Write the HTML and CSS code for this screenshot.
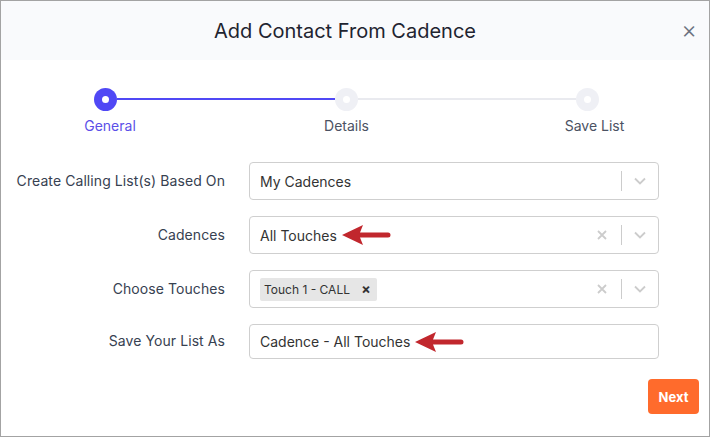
FILE: index.html
```html
<!DOCTYPE html>
<html lang="en">
<head>
    <meta charset="UTF-8">
    <title>Add Contact From Cadence</title>
    <link rel="stylesheet" href="styles.css">
</head>
<body>
    <div class="modal">
        <div class="modal-header">
            <h1>Add Contact From Cadence</h1>
            <span class="close">&times;</span>
        </div>

        <div class="stepper">
            <div class="step active first">
                <div class="dot"></div>
                <div class="step-label">General</div>
            </div>
            <div class="line active"></div>
            <div class="step">
                <div class="dot"></div>
                <div class="step-label">Details</div>
            </div>
            <div class="line"></div>
            <div class="step last">
                <div class="dot"></div>
                <div class="step-label">Save List</div>
            </div>
        </div>

        <div class="form">
            <label>Create Calling List(s) Based On</label>
            <div class="select">
                <span class="value">My Cadences</span>
                <span class="indicators">
                    <span class="sep"></span>
                    <svg class="chevron" width="12" height="8" viewBox="0 0 12 8"><path d="M1 1.5 L6 6.5 L11 1.5" fill="none" stroke="#cccccc" stroke-width="1.8"/></svg>
                </span>
            </div>

            <label>Cadences</label>
            <div class="select">
                <span class="value">All Touches
                    <svg class="arrow" width="50" height="20" viewBox="0 0 50 20"><path d="M0 10 L21 0 L18 7.5 L46 7.5 A2.5 2.5 0 0 1 46 12.5 L18 12.5 L21 20 Z" fill="#c1272d"/></svg>
                </span>
                <span class="indicators">
                    <svg class="clear" width="10" height="10" viewBox="0 0 10 10"><path d="M1 1 L9 9 M9 1 L1 9" stroke="#cccccc" stroke-width="1.8"/></svg>
                    <span class="sep"></span>
                    <svg class="chevron" width="12" height="8" viewBox="0 0 12 8"><path d="M1 1.5 L6 6.5 L11 1.5" fill="none" stroke="#cccccc" stroke-width="1.8"/></svg>
                </span>
            </div>

            <label>Choose Touches</label>
            <div class="select">
                <span class="tag">Touch 1 - CALL <b>&times;</b></span>
                <span class="indicators">
                    <svg class="clear" width="10" height="10" viewBox="0 0 10 10"><path d="M1 1 L9 9 M9 1 L1 9" stroke="#cccccc" stroke-width="1.8"/></svg>
                    <span class="sep"></span>
                    <svg class="chevron" width="12" height="8" viewBox="0 0 12 8"><path d="M1 1.5 L6 6.5 L11 1.5" fill="none" stroke="#cccccc" stroke-width="1.8"/></svg>
                </span>
            </div>

            <label>Save Your List As</label>
            <div class="input">
                <span class="value">Cadence - All Touches
                    <svg class="arrow" width="50" height="20" viewBox="0 0 50 20"><path d="M0 10 L21 0 L18 7.5 L46 7.5 A2.5 2.5 0 0 1 46 12.5 L18 12.5 L21 20 Z" fill="#c1272d"/></svg>
                </span>
            </div>
        </div>

        <div class="footer">
            <button class="next">Next</button>
        </div>
    </div>
</body>
</html>
```

FILE: styles.css
```css
body {
    margin: 0;
    padding: 0;
    font-family: 'Inter', 'Noto Sans', sans-serif;
    background-color: #fff;
}
.modal {
    width: 710px;
    height: 437px;
    box-sizing: border-box;
    border: 1px solid #a3a3a3;
    background-color: #fff;
    display: flex;
    flex-direction: column;
}
.modal-header {
    height: 59px;
    background-color: #f9fafc;
    display: flex;
    align-items: center;
    justify-content: center;
    padding-right: 20px;
    position: relative;
}
.modal-header h1 {
    margin: 0;
    font-size: 20px;
    font-weight: 400;
    color: #1f2430;
}
.close {
    position: absolute;
    right: 12px;
    top: 15px;
    font-size: 24px;
    line-height: 28px;
    color: #6b7280;
    font-weight: 300;
}
.stepper {
    display: flex;
    padding: 28px 0 0 93px;
    width: 505px;
}
.step {
    width: 23px;
    display: flex;
    flex-direction: column;
    align-items: center;
}
.dot {
    width: 23px;
    height: 23px;
    border-radius: 50%;
    background-color: #eff0f5;
    display: flex;
    align-items: center;
    justify-content: center;
}
.dot::after {
    content: "";
    width: 7px;
    height: 7px;
    border-radius: 50%;
    background-color: #fff;
}
.step.active .dot {
    background-color: #5048f5;
}
.step-label {
    margin-top: 6px;
    font-size: 14px;
    line-height: 17px;
    color: #4b5263;
    white-space: nowrap;
    display: flex;
    justify-content: center;
}
.step.first .step-label {
    margin-left: 9px;
}
.step.last .step-label {
    margin-left: 14px;
}
.step.active .step-label {
    color: #5b4fe8;
}
.line {
    flex: 1;
    height: 2px;
    margin-top: 10px;
    background-color: #e9eaef;
}
.line.active {
    background-color: #5048f5;
}
.form {
    display: grid;
    grid-template-columns: 224px 1fr;
    column-gap: 24px;
    row-gap: 16px;
    padding: 28px 50px 0 0;
}
.form label {
    font-size: 14px;
    color: #374151;
    text-align: right;
    align-self: center;
    padding-bottom: 2px;
    letter-spacing: 0.08px;
}
.select,
.input {
    height: 38px;
    box-sizing: border-box;
    border: 1px solid #cfcfcf;
    border-radius: 4px;
    display: flex;
    align-items: center;
    padding-left: 10px;
}
.input {
    height: 35px;
}
.value {
    flex: 1;
    font-size: 14px;
    color: #333;
    display: flex;
    align-items: center;
}
.arrow {
    margin-left: 5px;
}
.tag {
    flex: 0 0 auto;
    background-color: #e6e6e6;
    border-radius: 2px;
    font-size: 12px;
    color: #333;
    padding: 4px 6px 4px 4px;
    margin-right: auto;
    line-height: 14px;
}
.tag b {
    margin-left: 8px;
    font-size: 14px;
}
.indicators {
    display: flex;
    align-items: center;
    height: 100%;
}
.clear {
    margin-right: 14px;
}
.sep {
    width: 1px;
    height: 20px;
    background-color: #cccccc;
}
.chevron {
    margin: 0 12px 0 12px;
}
.footer {
    display: flex;
    justify-content: flex-end;
    padding: 20px 10px 0 0;
}
.next {
    width: 51px;
    height: 35px;
    border: none;
    border-radius: 4px;
    background-color: #ff6b2c;
    color: #fff;
    font-family: 'Inter', 'Noto Sans', sans-serif;
    font-weight: 700;
    font-size: 13px;
    cursor: pointer;
}
```
